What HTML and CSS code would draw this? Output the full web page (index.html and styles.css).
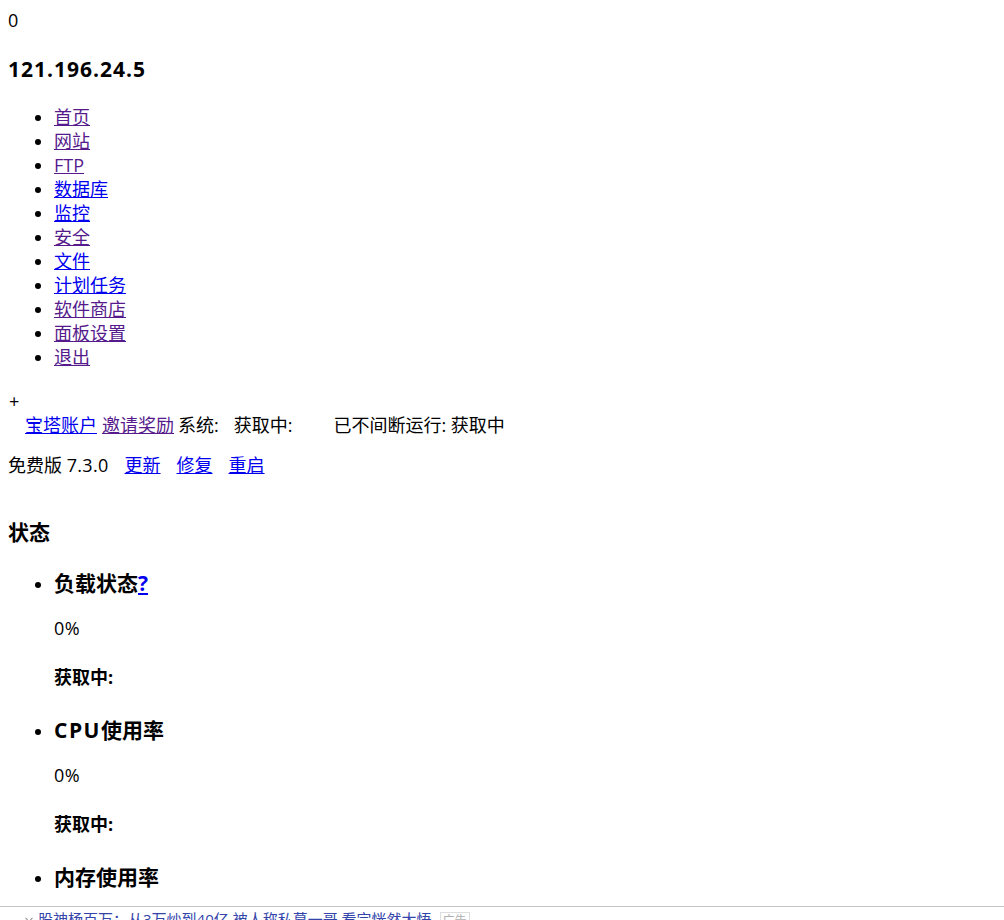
FILE: index.html
```html
<!DOCTYPE html>
<html lang="zh-CN">
<head>
<meta charset="utf-8">
<title>121.196.24.5</title>
<link rel="stylesheet" href="styles.css">
</head>
<body>
<div class="count">0</div>
<h3 class="ip">121.196.24.5</h3>
<ul class="nav">
  <li><a class="v" href="#">首页</a></li>
  <li><a class="v" href="#">网站</a></li>
  <li><a class="v" href="#">FTP</a></li>
  <li><a class="u" href="#">数据库</a></li>
  <li><a class="u" href="#">监控</a></li>
  <li><a class="v" href="#">安全</a></li>
  <li><a class="u" href="#">文件</a></li>
  <li><a class="u" href="#">计划任务</a></li>
  <li><a class="v" href="#">软件商店</a></li>
  <li><a class="v" href="#">面板设置</a></li>
  <li><a class="v" href="#">退出</a></li>
</ul>
<div class="plus">+</div>
<div class="account">
  <a class="u" href="#">宝塔账户</a>
  <a class="v gap-s" href="#">邀请奖励</a>
  <span class="gap-xs">系统:</span>
  <span class="gap-m">获取中:</span>
  <span class="gap-l">已不间断运行: 获取中</span>
</div>
<div class="version">
  <span>免费版 <span class="num">7.3.0</span></span>
  <a class="u gap-v" href="#">更新</a>
  <a class="u gap-v" href="#">修复</a>
  <a class="u gap-v" href="#">重启</a>
</div>
<h3 class="section">状态</h3>
<ul class="status">
  <li>
    <h3 class="st-title">负载状态<a class="u" href="#">?</a></h3>
    <p class="st-value">0%</p>
    <h4 class="st-sub">获取中:</h4>
  </li>
  <li>
    <h3 class="st-title"><span class="latin">CPU</span>使用率</h3>
    <p class="st-value">0%</p>
    <h4 class="st-sub">获取中:</h4>
  </li>
  <li>
    <h3 class="st-title">内存使用率</h3>
    <p class="st-value">0%</p>
    <h4 class="st-sub">获取中:</h4>
  </li>
</ul>
<div class="adbar">
  <svg class="chev" width="8" height="6" viewBox="0 0 8 6"><path d="M0.5 0.8 L4 4.6 L7.5 0.8" fill="none" stroke="#666" stroke-width="1"/></svg>
  <span class="ad-text">股神杨百万：从3万炒到40亿 被人称私募一哥 看完恍然大悟</span>
  <span class="ad-tag">广告</span>
</div>
</body>
</html>
```

FILE: styles.css
```css
html, body {
  background: #ffffff;
}
body {
  margin: 8px;
  font-family: "Open Sans", "Noto Sans CJK SC", sans-serif;
  font-size: 18px;
  line-height: 24px;
  color: #000000;
}
a {
  text-decoration: underline;
}
a.v { color: #551a8b; }
a.u { color: #0000ee; }

.count {
  height: 24px;
}
.ip {
  font-size: 21px;
  line-height: 28px;
  font-weight: bold;
  letter-spacing: 1px;
  margin: 23px 0 22px;
}
.nav {
  margin: 0;
  padding-left: 46px;
}
.nav li {
  line-height: 24px;
}
.plus {
  margin-top: 20px;
  padding-left: 1px;
}
.account {
  display: flex;
  align-items: baseline;
  padding-left: 17px;
  white-space: nowrap;
}
.gap-s { margin-left: 5px; }
.gap-xs { margin-left: 4px; }
.gap-m { margin-left: 15px; }
.gap-l { margin-left: 41px; }

.version {
  display: flex;
  align-items: baseline;
  margin-top: 16px;
  white-space: nowrap;
}
.num {
  letter-spacing: 0.3px;
}
.gap-v { margin-left: 16px; }

.section {
  font-size: 21px;
  line-height: 28px;
  font-weight: bold;
  margin: 41px 0 23px;
}
.status {
  margin: 0;
  padding-left: 46px;
}
.st-title {
  font-size: 21px;
  line-height: 28px;
  font-weight: bold;
  margin: 0 0 19px;
}
.latin {
  letter-spacing: 1.5px;
}
.st-value {
  margin: 0 0 25px;
  letter-spacing: 0.5px;
}
.st-sub {
  font-size: 18px;
  line-height: 24px;
  font-weight: bold;
  margin: 0 0 27px;
}

.adbar {
  position: fixed;
  left: 0;
  right: 0;
  top: 906px;
  height: 60px;
  background: #ffffff;
  border-top: 1px solid #c6c6c6;
  display: flex;
  align-items: flex-start;
  padding: 2px 0 0 25px;
  font-size: 15px;
  line-height: 20px;
  white-space: nowrap;
}
.chev {
  margin-top: 8px;
  margin-right: 5px;
}
.ad-text {
  color: #3344aa;
}
.ad-tag {
  margin-left: 8px;
  margin-top: 3px;
  font-size: 12px;
  line-height: 16px;
  padding: 0 2px;
  color: #b0b0b0;
  border: 1px solid #dddddd;
}
```
